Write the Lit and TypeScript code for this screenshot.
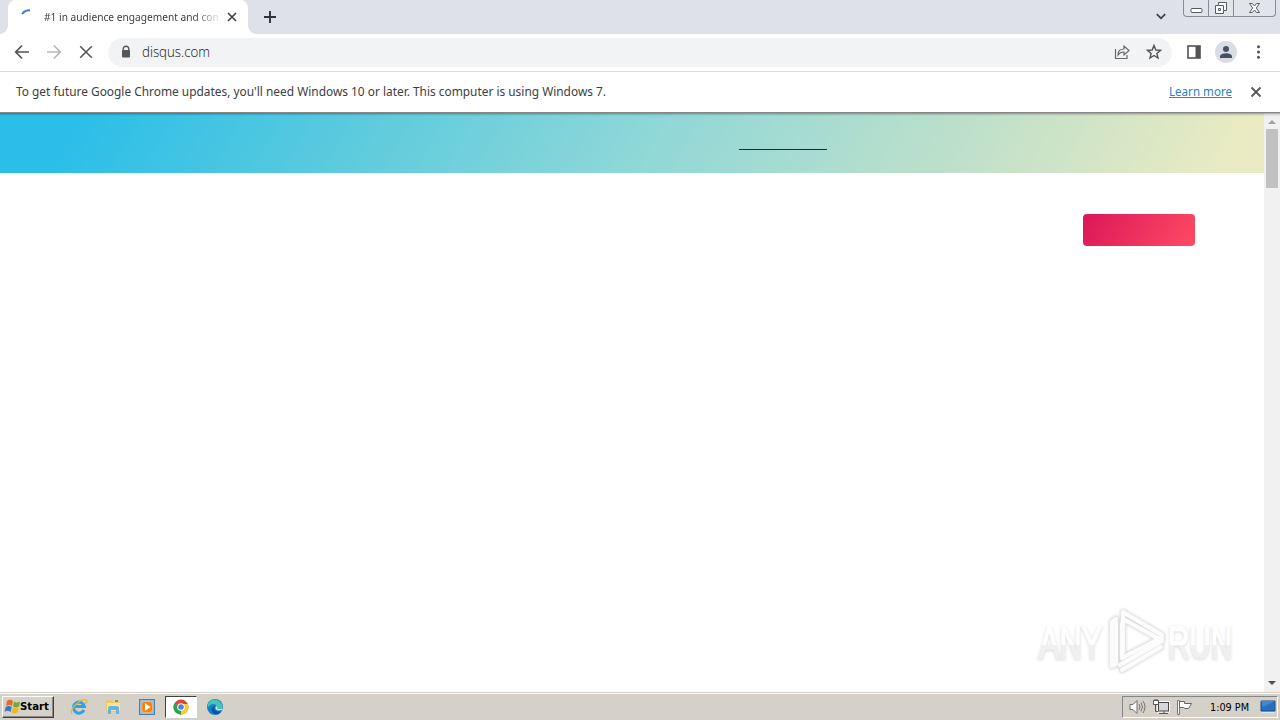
import { LitElement, html, svg, css } from "lit";
import { customElement } from "lit/decorators.js";

const label = (text: string, width: number, cls: string) => html`
  <svg class="label ${cls}" width=${width} height="20" viewBox="0 0 ${width} 20">
    <text x="0" y="14" textLength=${width} lengthAdjust="spacingAndGlyphs">${text}</text>
  </svg>`;

const icon = (w: number, h: number, body: unknown, cls = "") => html`
  <svg class="icon ${cls}" width=${w} height=${h} viewBox="0 0 ${w} ${h}">${body}</svg>`;

@customElement("app-root")
export class AppRoot extends LitElement {
  static styles = css`
    :host { display: flex; flex-direction: column; width: 1280px; height: 720px; overflow: hidden; background: #fff; position: relative; font-family: "Noto Sans", sans-serif; }
    * { box-sizing: border-box; }
    svg { display: block; flex: none; }
    .label { overflow: visible; }
    .title { font: 11px "Noto Sans", sans-serif; fill: #3c3e42; }
    .url { font: 300 15px "Open Sans", "Noto Sans", sans-serif; fill: #101114; margin-top: 2px; }
    .info { font: 12px "Noto Sans", sans-serif; fill: #3c3d40; }
    .link { font: 12px "Noto Sans", sans-serif; fill: #2f7fc4; }
    .start-text { font: bold 11px "DejaVu Sans Condensed", "DejaVu Sans", sans-serif; fill: #000; margin-top: -2px; }
    .clock { font: 11px "DejaVu Sans Condensed", "DejaVu Sans", sans-serif; fill: #000; }
    .tabs { height: 34px; background: #dee1e8; display: flex; flex: none; }
    .tab { width: 240px; height: 34px; margin-left: 8px; background: #fff; border-radius: 8px 8px 0 0; display: flex; align-items: center; padding-left: 12px; position: relative; }
    .tab::before, .tab::after { content: ""; position: absolute; bottom: 0; width: 8px; height: 8px; }
    .tab::before { left: -8px; background: radial-gradient(circle at 0 0, #dee1e8 7.5px, #fff 8px); }
    .tab::after { right: -8px; background: radial-gradient(circle at 100% 0, #dee1e8 7.5px, #fff 8px); }
    .clip { width: 174px; height: 20px; margin-left: 8px; overflow: hidden; mask-image: linear-gradient(90deg, #000 150px, transparent 178px); }
    .tab-close { margin-left: 9px; }
    .plus { margin: 10px 0 0 15px; }
    .chevron { margin: 12px 17px 0 auto; }
    .window { width: 93px; height: 17px; margin-right: 4px; border: 1px solid #888b91; border-top: 0; border-radius: 0 0 4px 4px; display: flex; background: #e1e4e9; }
    .window span { display: flex; justify-content: center; border-right: 1px solid #888b91; width: 25px; }
    .window span:last-child { width: 41px; border: 0; }
    .toolbar { height: 38px; flex: none; display: flex; align-items: center; border-bottom: 1px solid #dadce0; padding: 0 14px 1px; }
    .nav { display: flex; gap: 16px; }
    .address { width: 1064px; height: 29px; margin-left: 14px; border-radius: 15px; background: #f1f3f5; display: flex; align-items: center; padding: 0 9px 0 12px; }
    .address .url { margin-left: 10px; }
    .share { margin-left: auto; }
    .star { margin-left: 15px; }
    .panel { margin-left: 14px; }
    .avatar { margin-left: 13px; }
    .dots { margin-left: 17px; }
    .notice { height: 41px; flex: none; display: flex; align-items: center; padding: 0 18px 1px 16px; border-bottom: 1px solid #e0e0e0; }
    .learn { margin-left: auto; border-bottom: 1px solid #3381c3; height: 14px; margin-bottom: 1px; }
    .learn svg { margin-top: -2px; }
    .notice-close { margin-left: 18px; }
    .page { height: 579px; flex: none; display: flex; position: relative; }
    .page::before { content: ""; position: absolute; inset: -1px 0 auto; height: 4px; background: linear-gradient(#0007, #0002 60%, #0000); }
    .content { width: 1264px; }
    .banner { height: 60px; background: linear-gradient(120deg, #2abee8 6%, #59cade 27%, #91d8d7 52%, #bfe0ca 76%, #eaebc2 97%); padding: 36px 0 0 739px; }
    .underline { width: 88px; height: 1px; background: #0e3336; }
    .cta { width: 112px; height: 32px; margin: 41px 0 0 1083px; border-radius: 4px; background: linear-gradient(120deg, #db1759, #ff4a63); }
    .scroll { width: 16px; background: #f1f1f1; display: flex; flex-direction: column; align-items: center; }
    .thumb { width: 12px; height: 59px; background: #c1c1c1; }
    .down { margin-top: auto; }
    .watermark { position: absolute; left: 1032px; top: 604px; overflow: visible; }
    .mark { font: 45px "Liberation Sans", sans-serif; }
    .taskbar { height: 28px; flex: none; background: #d5d0c8; border-top: 1px solid #d5d0c8; box-shadow: inset 0 1px #fff; display: flex; align-items: center; padding: 1px 2px 0; }
    .start { width: 52px; height: 22px; display: flex; align-items: center; padding-left: 1px; border: 1px solid; border-color: #fff #404040 #404040 #fff; box-shadow: inset -1px -1px #888; }
    .apps { display: flex; align-items: center; margin-left: 8px; }
    .app { width: 34px; height: 22px; display: flex; align-items: center; justify-content: center; }
    .app.active { width: 32px; background: #fff; border: 1px solid; border-color: #404040 #fff #fff #404040; margin: 0 1px; }
    .tray { margin-left: auto; width: 156px; height: 22px; border: 1px solid; border-color: #858585 #fff #fff #858585; display: flex; align-items: center; padding-left: 6px; }
    .net { margin-left: 7px; }
    .flag { margin-left: 6px; }
    .tray .clock { margin-left: 17px; }
    .desktop { margin-left: 11px; }
  `;

  private cross(size: number, color: string, weight: number, cls = "") {
    return icon(size, size, svg`<path d="M1 1 ${size - 1} ${size - 1}M${size - 1} 1 1 ${size - 1}" stroke=${color} stroke-width=${weight}/>`, cls);
  }

  private arrow(color: string, flip: boolean) {
    return icon(16, 16, svg`<path transform=${flip ? "translate(16 0) scale(-1 1)" : ""} d="M15 8H2M8 1.5 1.7 8 8 14.5" fill="none" stroke=${color} stroke-width="1.7"/>`);
  }

  private watermark() {
    const shape = (stroke: string, width: number) => svg`
      <g fill="none" stroke=${stroke} stroke-width=${width} stroke-linejoin="round" stroke-linecap="round">
        <path d="M91 48V8L130 31 127 35 91 15M84 15 80 18V62L84 60V17M90 19V54L127 35M88 61 130 37V33M90 66 129 43"/>
      </g>`;
    return html`<svg class="watermark" width="212" height="76" viewBox="0 0 212 76">
      <defs><filter id="soft" x="-20%" y="-20%" width="140%" height="140%"><feGaussianBlur stdDeviation="1.8"/></filter>
        <linearGradient id="fade" x1="0" y1="0" x2="0" y2="1"><stop offset=".54" stop-color="#fff"/><stop offset=".56" stop-color="#f0f0f0"/></linearGradient></defs>
      <g filter="url(#soft)" opacity=".5">${shape("#aaa", 6)}</g>
      ${shape("#e8e8e8", 5)}${shape("#fcfcfc", 3.8)}
      <g class="mark" filter="url(#soft)" fill="#aaa" stroke="#aaa" stroke-width="2" opacity=".45"><text x="7" y="55" textLength="63" lengthAdjust="spacingAndGlyphs">ANY</text><text x="136" y="55" textLength="64" lengthAdjust="spacingAndGlyphs">RUN</text></g>
      <g class="mark" fill="url(#fade)" stroke="url(#fade)" stroke-width="1.6"><text x="7" y="54" textLength="63" lengthAdjust="spacingAndGlyphs">ANY</text><text x="136" y="54" textLength="64" lengthAdjust="spacingAndGlyphs">RUN</text></g>
    </svg>`;
  }

  render() {
    return html`
      <div class="tabs">
        <div class="tab">
          ${icon(16, 16, svg`<path d="M2 5Q5 1 10 1.2" fill="none" stroke="#3e7fd0" stroke-width="2"/>`)}
          <div class="clip">${label("#1 in audience engagement and com", 178, "title")}</div>
          ${this.cross(10, "#3c4043", 1.6, "tab-close")}
        </div>
        ${icon(14, 14, svg`<path d="M7 1V13M1 7H13" stroke="#303238" stroke-width="1.9"/>`, "plus")}
        ${icon(10, 8, svg`<path d="M.8 2.2 5 6.3 9.2 2.2" fill="none" stroke="#3c4043" stroke-width="1.8"/>`, "chevron")}
        <div class="window">
          <span>${icon(13, 16, svg`<rect x="1" y="8.5" width="11" height="4" rx="1" fill="#fff" stroke="#555a65"/>`)}</span>
          <span>${icon(14, 16, svg`<path d="M4.5 2.5h8v8h-3v3h-8v-8h3z" fill="#fff" stroke="#555a65"/><path d="M4.5 5.5h5v5M4.5 8.5h2v2h-2z" fill="none" stroke="#555a65"/>`)}</span>
          <span>${icon(13, 16, svg`<path d="M1.5 3.5H4.5L6.5 6 8.5 3.5H11.5L8.3 8 11.5 12.5H8.5L6.5 10 4.5 12.5H1.5L4.7 8Z" fill="#fff" stroke="#555a65"/>`)}</span>
        </div>
      </div>
      <div class="toolbar">
        <div class="nav">
          ${this.arrow("#505256", false)}${this.arrow("#b5b6b8", true)}
          ${icon(16, 16, svg`<path d="M2.2 2.2 13.8 13.8M13.8 2.2 2.2 13.8" stroke="#55585b" stroke-width="1.6"/>`)}
        </div>
        <div class="address">
          ${icon(12, 14, svg`<path d="M3.2 6V4a2.8 2.8 0 0 1 5.6 0v2" fill="none" stroke="#55585b" stroke-width="1.4"/><rect x="2" y="5" width="8" height="7.5" rx="1" fill="#55585b"/>`)}
          ${label("disqus.com", 68, "url")}
          ${icon(16, 16, svg`<path d="M1.5 5V14.5H13V11M4 11Q4 5 10 5V2L15 6.5 10 11V8Q6 8 4 11Z" fill="none" stroke="#66696c" stroke-width="1.2"/>`, "share")}
          ${icon(18, 18, svg`<path d="M9 2.5 10.8 7 15.5 7.3 11.9 10.4 13 15 9 12.5 5 15 6.1 10.4 2.5 7.3 7.2 7Z" fill="none" stroke="#505356" stroke-width="1.4"/>`, "star")}
        </div>
        ${icon(16, 16, svg`<rect x="2" y="2" width="12" height="12" fill="#fff" stroke="#515356" stroke-width="1.6"/><path d="M9.5 2H14V14H9.5Z" fill="#515356"/>`, "panel")}
        ${icon(22, 22, svg`<circle cx="11" cy="11" r="11" fill="#dadde4"/><circle cx="11" cy="8" r="3" fill="#47506b"/><path d="M5 17V15Q6 12.3 11 12.3T17 15V17Z" fill="#47506b"/>`, "avatar")}
        ${icon(10, 16, svg`<g fill="#505356"><circle cx="4.5" cy="2.7" r="1.5"/><circle cx="4.5" cy="8" r="1.5"/><circle cx="4.5" cy="13.2" r="1.5"/></g>`, "dots")}
      </div>
      <div class="notice">
        ${label("To get future Google Chrome updates, you'll need Windows 10 or later. This computer is using Windows 7.", 590, "info")}
        <span class="learn">${label("Learn more", 63, "link")}</span>
        ${icon(12, 12, svg`<path d="M1.5 1.5 10.5 10.5M10.5 1.5 1.5 10.5" stroke="#55585b" stroke-width="1.8"/>`, "notice-close")}
      </div>
      <div class="page">
        <div class="content">
          <div class="banner"><div class="underline"></div></div>
          <div class="cta"></div>
        </div>
        <div class="scroll">
          ${icon(16, 16, svg`<path d="M4 11 8 7 12 11Z" fill="#a3a3a3"/>`)}
          <div class="thumb"></div>
          ${icon(16, 16, svg`<path d="M4 5H12L8 9Z" fill="#505050"/>`, "down")}
        </div>
      </div>
      <div class="taskbar">
        <div class="start">
          ${icon(16, 16, svg`<path d="M3 2Q6 -.5 9 2L8 7Q5 5 2 7Z" fill="#e86a27"/><path d="M10 2.5Q13 4.5 16 2.5L15 7.5Q12 9.5 9 7.5Z" fill="#75aa32"/><path d="M1.8 8Q5 6 7.8 8L6.5 13Q3.5 10.5 .5 13Z" fill="#3378c5"/><path d="M9 8.5Q12 10.5 15 8.5L13.8 13Q10.5 15.5 7.5 13Z" fill="#f0b61f"/>`)}
          ${label("Start", 29, "start-text")}
        </div>
        <div class="apps">
          <div class="app">${icon(18, 18, svg`<path d="M14 12A5.5 5.5 0 1 1 14.4 8.5H5" fill="none" stroke="#36a0dc" stroke-width="3"/><path d="M2 16C-2 12 11 0 16 2Q18 3 15 6" fill="none" stroke="#e1b842" stroke-width="1.2"/>`)}</div>
          <div class="app">${icon(16, 16, svg`<path d="M1 3V1h6l1 2h7v10H1Z" fill="#e9c968"/><path d="M2 4H15V12H2Z" fill="#f8e49b"/><path d="M3 15V9Q3 7 5 7H12Q14 7 14 9V15H11V11H6V15Z" fill="#65b5dd"/><path d="M10 2h3" stroke="#65ad54" stroke-width="2"/>`)}</div>
          <div class="app">${icon(16, 16, svg`<rect x=".5" y=".5" width="15" height="15" fill="#92bee2" stroke="#4480b4"/><rect x="2.5" y="2.5" width="11" height="11" rx="3" fill="#f18419" stroke="#f7b66c"/><path d="M6 4.3 11.5 8 6 11.7Z" fill="#fff"/>`)}</div>
          <div class="app active">${icon(16, 16, svg`<circle cx="8" cy="8" r="7.5" fill="#e24435"/><path d="M8 8 1.3 4.5A7.5 7.5 0 0 0 8 15.5L11.5 10Z" fill="#2da24f"/><path d="M8 8 8 15.5A7.5 7.5 0 0 0 15 5H8Z" fill="#fbcc2d"/><circle cx="8" cy="8" r="3.8" fill="#fff"/><circle cx="8" cy="8" r="2.8" fill="#4285e6"/>`)}</div>
          <div class="app">${icon(16, 16, svg`<circle cx="8" cy="8" r="8" fill="#147fcb"/><path d="M1 5Q5-2 12 2Q17 6 15 10H9Q11 5 6 5Q3 5 1 8Z" fill="#43c6b3"/><path d="M8 7Q6 13 14 12.5Q11 17 6 14Q2 9 8 7Z" fill="#1352a0"/><path d="M9 7Q7 11 12 11.5Q15 11 16 10H10Q11 8 9 7Z" fill="#e4eef0"/>`)}</div>
        </div>
        <div class="tray">
          ${icon(17, 16, svg`<path d="M1 5.5H4L8 1.5V14.5L4 10.5H1Z" fill="#fff" stroke="#6d6d6d"/><path d="M10 5Q12 8 10 11M12 3.5Q15 8 12 12.5M14 2Q18 8 14 14" fill="none" stroke="#777"/>`)}
          ${icon(17, 16, svg`<rect x="5.5" y="3.5" width="10" height="8.5" fill="#d7d7d7" stroke="#fff" stroke-width="3"/><rect x="5.5" y="3.5" width="10" height="8.5" fill="#d7d7d7" stroke="#444"/><path d="M6 14.5h9M11 12v2" stroke="#555"/><path d="M2.5 5.5V12.5H5" fill="none" stroke="#555"/><path d="M.5 1.5h5v4H.5zM2 0v2M4 0v2" fill="#fff" stroke="#555"/>`, "net")}
          ${icon(17, 16, svg`<path d="M1.5 1.5h2v14h-2z" fill="#fff" stroke="#777"/><path d="M3.5 2.5H8.5V4.5H15.5L12.5 9.5H9L7.5 8.5H3.5Z" fill="#fff" stroke="#666"/>`, "flag")}
          ${label("1:09 PM", 39, "clock")}
          ${icon(16, 16, svg`<path d="M1 2H15V12H1Z" fill="#2870bd" stroke="#194e87"/><path d="M1 2H15L3 8Z" fill="#4388cf"/><path d="M2 13.5H14" stroke="#d9edf9"/>`, "desktop")}
        </div>
      </div>
      ${this.watermark()}
    `;
  }
}
